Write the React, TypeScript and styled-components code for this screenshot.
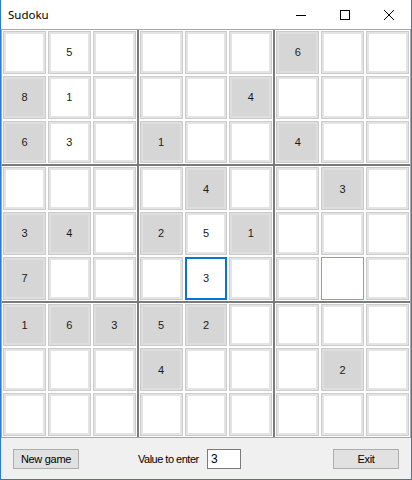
import styled, { createGlobalStyle } from 'styled-components';

const GlobalStyle = createGlobalStyle`
    html, body {
        margin: 0;
        padding: 0;
        background: #ffffff;
    }
    * {
        box-sizing: border-box;
    }
`;

const Window = styled.div`
    width: 412px;
    height: 480px;
    display: flex;
    flex-direction: column;
    border: 1px solid #2b7bd4;
    border-top: none;
    background: #ffffff;
    font-family: 'Liberation Sans', Arial, sans-serif;
    font-size: 11px;
    color: #000;
`;

const TitleBar = styled.div`
    height: 29px;
    display: flex;
    align-items: center;
    background: #ffffff;
`;

const Title = styled.span`
    flex: 1;
    padding-left: 7px;
    font-family: 'Noto Sans', 'Open Sans', sans-serif;
    font-size: 11.5px;
    color: #000;
`;

const CaptionButton = styled.div`
    width: 44px;
    height: 29px;
    display: flex;
    align-items: center;
    justify-content: center;
`;

const Board = styled.div`
    height: 409px;
    display: grid;
    grid-template-columns: repeat(3, 1fr);
    grid-template-rows: repeat(3, 1fr);
    gap: 2px;
    background: #7a7a7a;
    border: 1px solid #a6a6a6;
`;

const Box = styled.div`
    display: grid;
    grid-template-columns: repeat(3, 1fr);
    grid-template-rows: repeat(3, 1fr);
    gap: 2px;
    padding: 1px;
    background: #ffffff;
`;

const Cell = styled.div<{ $given: boolean; $mode?: 'selected' | 'hover' }>`
    display: flex;
    align-items: center;
    justify-content: center;
    font-size: 11px;
    color: #1a1a1a;
    background: ${(p) => (p.$given ? '#d6d6d6' : '#ffffff')};
    border: ${(p) =>
        p.$mode === 'selected'
            ? '2px solid #0a74d0'
            : p.$mode === 'hover'
            ? '1px solid #66a9e6'
            : '1px solid #cbcbcb'};
    box-shadow: ${(p) =>
        p.$mode ? 'none' : `inset 0 0 0 2px ${p.$given ? '#dedede' : '#e4e4e4'}`};
`;

const Footer = styled.div`
    flex: 1;
    display: flex;
    align-items: center;
    padding: 0 12px 0 12px;
    background: #f0f0f0;
`;

const Button = styled.button`
    width: 66px;
    height: 20px;
    padding: 0;
    background: #e1e1e1;
    border: 1px solid #adadad;
    font-family: 'Liberation Sans', Arial, sans-serif;
    font-size: 11px;
    letter-spacing: -0.3px;
    color: #000;
`;

const Label = styled.span`
    margin-left: 59px;
    width: 69px;
    letter-spacing: -0.5px;
`;

const ValueInput = styled.div`
    width: 34px;
    height: 20px;
    padding: 2px 3px;
    background: #ffffff;
    border: 1px solid #7a7a7a;
    font-size: 12px;
`;

const Spacer = styled.div`
    flex: 1;
`;

// 0 = empty, positive = given clue, negative = value entered by player
const puzzle: number[][] = [
    [0, -5, 0, 0, 0, 0, 6, 0, 0],
    [8, -1, 0, 0, 0, 4, 0, 0, 0],
    [6, -3, 0, 1, 0, 0, 4, 0, 0],
    [0, 0, 0, 0, 4, 0, 0, 3, 0],
    [3, 4, 0, 2, -5, 1, 0, 0, 0],
    [7, 0, 0, 0, -3, 0, 0, 0, 0],
    [1, 6, 3, 5, 2, 0, 0, 0, 0],
    [0, 0, 0, 4, 0, 0, 0, 2, 0],
    [0, 0, 0, 0, 0, 0, 0, 0, 0],
];

const selected = [5, 4];
const hovered = [5, 7];

function modeOf(r: number, c: number): 'selected' | 'hover' | undefined {
    if (r === selected[0] && c === selected[1]) return 'selected';
    if (r === hovered[0] && c === hovered[1]) return 'hover';
    return undefined;
}

export default function App() {
    const boxes = [0, 1, 2, 3, 4, 5, 6, 7, 8];

    return (
        <>
            <GlobalStyle />
            <Window>
                <TitleBar>
                    <Title>Sudoku</Title>
                    <CaptionButton>
                        <svg width="10" height="10" viewBox="0 0 10 10">
                            <line x1="0" y1="5.5" x2="10" y2="5.5" stroke="#000" strokeWidth="1" />
                        </svg>
                    </CaptionButton>
                    <CaptionButton>
                        <svg width="10" height="10" viewBox="0 0 10 10">
                            <rect x="0.5" y="0.5" width="9" height="9" fill="none" stroke="#000" strokeWidth="1" />
                        </svg>
                    </CaptionButton>
                    <CaptionButton>
                        <svg width="10" height="10" viewBox="0 0 10 10">
                            <path d="M0 0 L10 10 M10 0 L0 10" stroke="#000" strokeWidth="1" />
                        </svg>
                    </CaptionButton>
                </TitleBar>
                <Board>
                    {boxes.map((b) => {
                        const br = Math.floor(b / 3) * 3;
                        const bc = (b % 3) * 3;
                        return (
                            <Box key={b}>
                                {boxes.map((i) => {
                                    const r = br + Math.floor(i / 3);
                                    const c = bc + (i % 3);
                                    const v = puzzle[r][c];
                                    return (
                                        <Cell key={i} $given={v > 0} $mode={modeOf(r, c)}>
                                            {v !== 0 ? Math.abs(v) : ''}
                                        </Cell>
                                    );
                                })}
                            </Box>
                        );
                    })}
                </Board>
                <Footer>
                    <Button>New game</Button>
                    <Label>Value to enter</Label>
                    <ValueInput>3</ValueInput>
                    <Spacer />
                    <Button>Exit</Button>
                </Footer>
            </Window>
        </>
    );
}
